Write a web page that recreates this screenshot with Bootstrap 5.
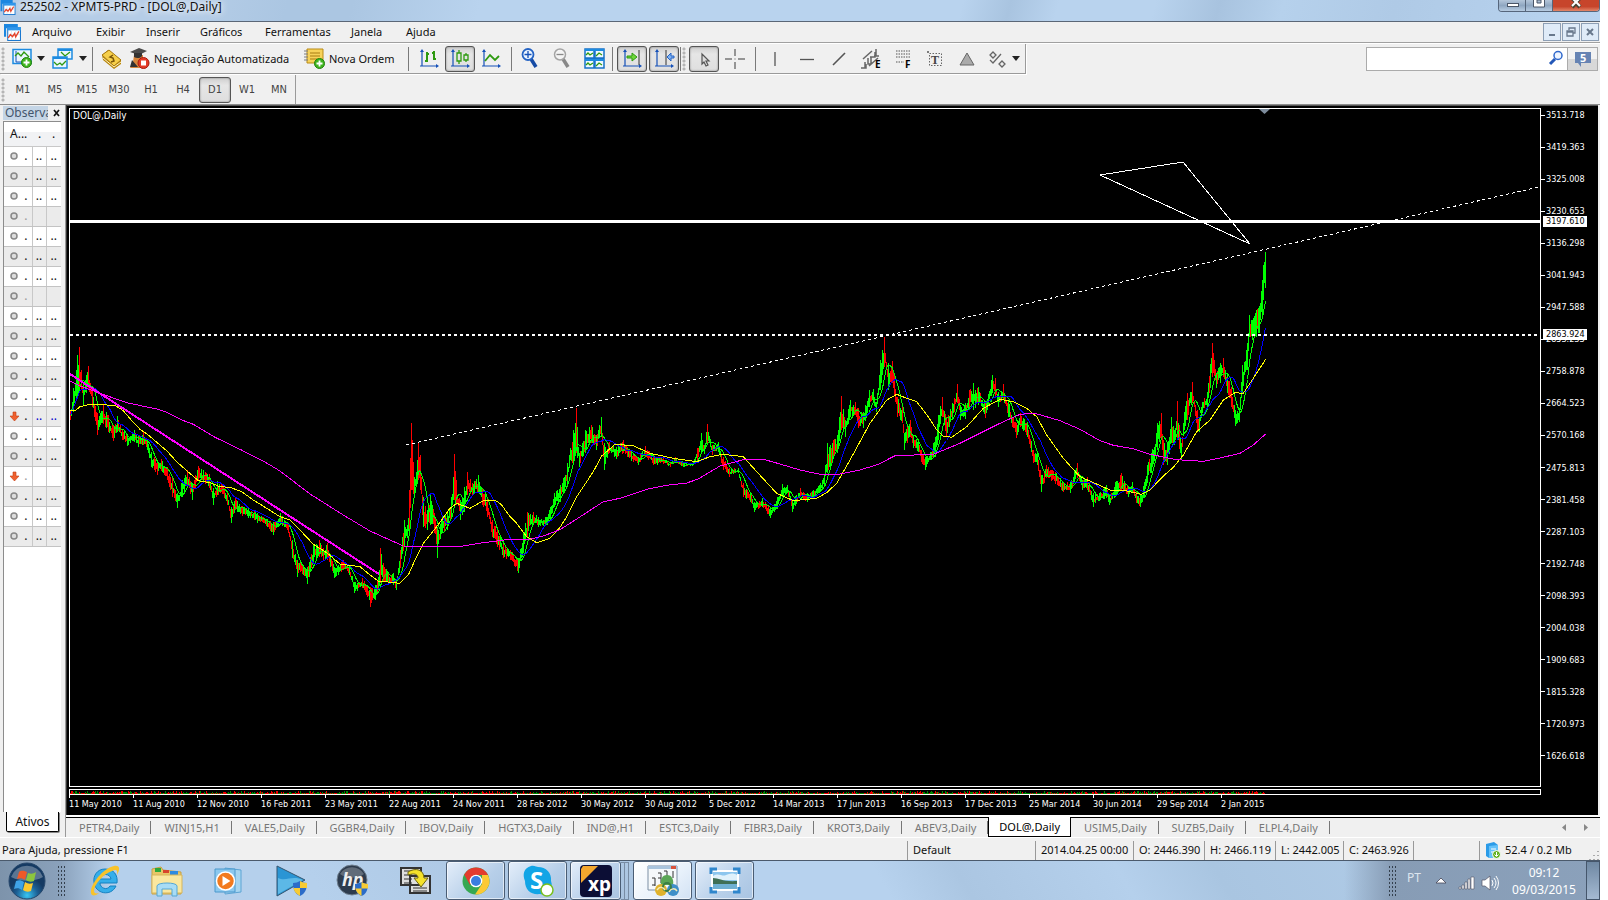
<!DOCTYPE html>
<html lang="pt-BR">
<head>
<meta charset="utf-8">
<meta name="viewport" content="width=device-width, initial-scale=1">
<title>252502 - XPMT5-PRD - [DOL@,Daily]</title>
<link rel="stylesheet" href="https://cdn.jsdelivr.net/npm/bootstrap@5.3.0/dist/css/bootstrap.min.css">
<style>
  :root { --ui: "Noto Sans", "Open Sans", sans-serif; --tahoma: "DejaVu Sans Condensed", "DejaVu Sans", sans-serif; }
  body { font-family: var(--ui); font-size: 11px; line-height: 16px; color: #111; background: #fff; padding-right: 8px; }
  svg { display: block; flex: none; overflow: visible; }
  button { border: 0; background: none; padding: 0; color: inherit; }
  .app-window { min-height: 100vh; background: #f0f0f0; }
  .aero { background: linear-gradient(105deg, #b5cde7 0 12%, #abc6e2 18% 22%, #b9d3ee 30% 60%, #a9c4e0 63%, #b9d3ee 66% 72%, #a8c3df 76%, #b6d1ec 80%, #afcae6 87%, #b9d4f0 100%); }
  .title-strip { height: 22px; border-bottom: 1px solid #5b6777; font-size: 12px; }
  .title-name { text-shadow: 0 0 6px #fff, 0 0 8px #fff; padding-bottom: 7px; }
  .title-name span { line-height: 14px; }
  .caption-btns { height: 12px; border: 1px solid #56667c; border-top: 0; border-radius: 0 0 4px 4px; overflow: hidden; }
  .caption-btns button { width: 27px; background: linear-gradient(#b4c6da, #8fa7c1 50%, #b7cce2); border-right: 1px solid #56667c; }
  .caption-btns button:last-child { width: 46px; border: 0; background: linear-gradient(#c7452b 60%, #e2876a); }
  .menu-strip { height: 21px; border-bottom: 1px solid #a0a0a0; box-shadow: 0 1px #fff; }
  .menu-strip a { color: #111; text-decoration: none; }
  .menu-items { margin-left: 11px; }
  .mdi-btn { width: 18px; height: 18px; border: 1px solid #8d9fb5; background: #dfebf8; display: grid; place-items: center; }
  .tool-row { margin-top: 1px; }
  .tool-strip { height: 30px; border-bottom: 1px solid #9a9a9a; width: 1026px; border-right: 1px solid #9a9a9a; box-shadow: 1px 1px #fff; }
  .grip { width: 8px; height: 24px; background: radial-gradient(circle at 3px 2px, #b5b5b5 1px, transparent 2px) 0 0 / 8px 4px; flex: none; }
  .tb { width: 32px; height: 26px; display: grid; place-items: center; flex: none; }
  .tb.down { border: 1px solid #555; border-radius: 3px; background: linear-gradient(#cfcfcf, #e6e6e6 30%, #dedede); width: 30px; box-shadow: inset 0 0 2px #777; }
  .tb.slim { width: 28px; }
  .auto-btn { width: 179px; padding-left: 4px; white-space: nowrap; }
  .order-btn { width: 104px; white-space: nowrap; }
  .caret { width: 10px; height: 26px; display: grid; place-items: center; flex: none; }
  .sep { width: 1px; height: 24px; background: #7a7a7a; flex: none; }
  .find-field { width: 202px; height: 24px; border: 1px solid #ababab; border-radius: 0; background: #fff; padding: 0 24px 0 4px; }
  .find-icon { position: absolute; right: 4px; top: 3px; }
  .chat-btn { width: 30px; height: 24px; border: 1px solid #ababab; border-left: 0; background: linear-gradient(#f2f2f2 50%, #d8d8d8 50%); }
  .frame-strip { height: 31px; border-bottom: 1px solid #8c8c8c; padding-top: 1px; }
  .frame-group { border-right: 1px solid #9a9a9a; color: #444; font: 11px/16px var(--tahoma); width: 296px; }

  .side { width: 66px; flex: none; border-right: 1px solid #999; padding-left: 3px; }
  .side-cap { height: 16px; color: #44566c; font-size: 12px; }
  .side-cap span { width: 45px; overflow: hidden; background: #c4d5e6; padding-left: 2px; white-space: nowrap; line-height: 14px; }
  .side-body { background: #fff; border-left: 1px solid #8c8c8c; border-top: 1px solid #8c8c8c; width: 58px; }
  .watch { width: 57px; table-layout: fixed; border-collapse: collapse; font-size: 12px; }
  .watch th { height: 24px; font-weight: 400; border-bottom: 1px solid #c8c8c8; background: linear-gradient(#fff 40%, #f1f2f4 40%); padding: 0 0 0 6px; }
  .watch td { height: 20px; border-bottom: 1px solid #c3c3c3; border-right: 1px solid #c8c8c8; padding: 0; text-align: center; line-height: 14px; }
  .watch td:last-child { border-right: 0; }
  .watch tr:nth-child(even) td { background: #ebebeb; }
  .watch .first-cell { padding: 0 4px 0 6px; }
  .watch .fade-dot { color: #999; }
  .watch .blue-dot { color: #00c; }
  .side-tab { margin: 0 6px 5px 3px; height: 20px; background: #fff; border: 1px solid #000; border-top: 0; border-radius: 0 0 2px 2px; box-shadow: 1px 1px #888; font-size: 12px; }

  .chart-area { background: #000; color: #fff; border-top: 1px solid #555; font: 9px/12px var(--tahoma); margin-right: 2px; padding: 2px 0 0 2px; border-left: 1px solid #333; }
  .plot { position: relative; min-height: 400px; }
  .plot svg.plot-svg { position: absolute; inset: 0; width: 100%; height: 100%; }
  .plot-name { position: absolute; left: 4px; top: 2px; font-size: 10px; }
  .price-scale { width: 57px; position: relative; padding: 1px 0 33px 0; flex: none; }
  .price-scale div { line-height: 12px; height: 12px; display: flex; align-items: center; gap: 1px; }
  .price-scale div::before { content: ""; width: 4px; height: 1px; background: #fff; }
  .price-tag { position: absolute; left: 2px; background: #fff; color: #000; line-height: 11px; padding: 0 2px 0 3px; }
  .time-scale { height: 20px; padding-right: 313px; }
  .time-scale div { width: 0; flex: 1 1 0; white-space: nowrap; line-height: 13px; padding-top: 3px; position: relative; }
  .time-scale div::before { content: ""; position: absolute; left: 0; top: -1px; width: 1px; height: 4px; background: #fff; }

  .tab-strip { height: 20px; border-top: 1px solid #000; margin-top: 2px; color: #777; box-shadow: 0 -2px #fff; }
  .tab-strip button { height: 19px; padding: 0 12px 0 13px; position: relative; white-space: nowrap; }
  .tab-strip button::after { content: ""; position: absolute; right: 0; top: 3px; height: 13px; width: 1px; background: #777; }
  .tab-strip button.on { background: #fff; color: #000; border: 1px solid #000; border-top: 0; margin-top: -1px; height: 20px; padding: 0 10px; }
  .tab-strip button.on::after { display: none; }
  .tab-arrows { gap: 18px; padding-top: 6px; }
  .status-strip { height: 23px; border-top: 1px solid #fff; padding-top: 2px; }
  .status-strip .field { height: 19px; line-height: 18px; border-left: 1px solid #999; padding-left: 5px; white-space: nowrap; overflow: hidden; flex: none; }

  .task-strip { height: 40px; border-top: 1px solid #4b5a6c; position: relative; background: linear-gradient(90deg, #7d93ab 0, #8aa1bb 60px, transparent 110px, transparent 84%, #879cb5 87%, #8ba1bb 100%), linear-gradient(60deg, #b5d0ec 0 20%, #a9c3df 38%, #b7d2ee 45% 55%, #abc6e2 60%, #b5d0ec 70%, #a9c5e1 76%, #b6d1ec 100%); }
  .start-btn { width: 53px; }
  .task-strip .launch { width: 62px; height: 39px; display: grid; place-items: center; flex: none; }
  .task-strip .open-app { width: 59px; height: 39px; margin-right: 3px; border: 1px solid #4a5d74; border-radius: 3px; background: linear-gradient(135deg, #e4eefa, #b7cfe9 60%, #a9c4e2); box-shadow: inset 0 0 0 1px #ffffff99; display: grid; place-items: center; flex: none; }
  .task-strip .open-app.lit { background: linear-gradient(135deg, #fff, #e8f1fb 60%, #d2e2f4); }
  .task-strip .open-app.stacked { width: 51px; margin-right: 0; }
  .stack-edge { width: 4px; height: 38px; border: 1px solid #788ca4; border-left: 0; flex: none; }
  .dots-grip { width: 9px; height: 32px; background: radial-gradient(circle, #34404e 1px, transparent 1px) 0 0 / 3px 4px; flex: none; }
  .tray { color: #fff; font-size: 12px; }
  .tray .lang { color: #dde5ee; width: 28px; margin-bottom: 5px; }
  .clock { line-height: 17px; width: 74px; text-align: center; margin: 0 5px 0 8px; }
  .peek { width: 14px; height: 39px; border: 1px solid #45566b; background: linear-gradient(#6f88a3, #a5bad2); flex: none; }
</style>
</head>
<body>
<svg width="0" height="0" class="position-absolute" aria-hidden="true">
  <symbol id="appmark" viewBox="0 0 16 16"><path d="M0 0h13v4H2v8H0z" fill="#1b86e0"/><rect x="3.500" y="3.500" width="12" height="12" fill="#fff" stroke="#1b78cf"/><path d="M3 3h13v3H3z" fill="#2f96ea"/><path d="M7 6v9M11 6v9M4 10h11" stroke="#d5dde6" stroke-width=".7"/><path d="M4 13l2-3 2 2 2-3 1 3 3-5" fill="none" stroke="#e5442b" stroke-width="1.300"/></symbol>
  <symbol id="plus" viewBox="0 0 11 11"><circle cx="5.500" cy="5.500" r="5" fill="#3fb51e" stroke="#20800c"/><path d="M5.500 2.500v6M2.500 5.500h6" stroke="#fff" stroke-width="1.800"/></symbol>
  <symbol id="axes" viewBox="0 0 20 20"><path d="M3 2v15h15M1 17h3" fill="none" stroke="#1450b8" stroke-width="1.200"/><path d="M3 0l2 3H1zM20 17l-3-2v4z" fill="#1450b8"/></symbol>
  <symbol id="shield" viewBox="0 0 14 15"><path d="M7 0c2 1 4 2 7 2 0 6-2 11-7 13C2 13 0 8 0 2c3 0 5-1 7-2z" fill="#2b6cc8"/><path d="M7 0c2 1 4 2 7 2v5H7zM7 7v8C3 13 1 10 .5 7z" fill="#f7cb34"/></symbol>
</svg>

<div class="app-window d-flex flex-column">
  <header class="title-strip aero d-flex justify-content-between align-items-start">
    <div class="title-name d-flex align-items-start gap-1"><svg width="16" height="15"><use href="#appmark"/></svg><span>252502 - XPMT5-PRD - [DOL@,Daily]</span></div>
    <div class="caption-btns d-flex">
      <button aria-label="Minimizar"><svg width="26" height="12"><rect x="8.500" y="3.500" width="11" height="3" fill="#fff" stroke="#4b5768"/></svg></button>
      <button aria-label="Restaurar"><svg width="26" height="12"><path d="M7.500-2v9h11v-9zM11 0h4v3h-4z" fill="#fff" stroke="#4b5768"/></svg></button>
      <button aria-label="Fechar"><svg width="46" height="12"><path d="M19-2l4 4 4-4M19 7l4-4 4 4" fill="none" stroke="#443" stroke-width="4"/><path d="M19-2l4 4 4-4M19 6l4-4 4 4" fill="none" stroke="#fff" stroke-width="2"/></svg></button>
    </div>
  </header>

  <nav class="menu-strip d-flex align-items-center ps-1" aria-label="Menu">
    <svg width="17" height="17"><use href="#appmark"/></svg>
    <div class="menu-items d-flex" id="menus"></div>
    <div class="ms-auto d-flex" style="gap:1px;padding-right:1px">
      <button class="mdi-btn" aria-label="Minimizar gráfico"><svg width="10" height="10"><path d="M2 8h6" stroke="#68788c" stroke-width="2"/></svg></button>
      <button class="mdi-btn" aria-label="Restaurar gráfico"><svg width="10" height="10"><path d="M3 3V1h6v5H7M1 4h6v5H1zM1 5h6" fill="none" stroke="#68788c" stroke-width="1.300"/></svg></button>
      <button class="mdi-btn" aria-label="Fechar gráfico"><svg width="10" height="10"><path d="M2 2l6 6M8 2l-6 6" stroke="#68788c" stroke-width="2"/></svg></button>
    </div>
  </nav>

  <div class="tool-row d-flex align-items-start">
    <div class="tool-strip d-flex align-items-center flex-shrink-0">
      <span class="grip"></span>
      <button class="tb slim" aria-label="Novo gráfico"><svg width="21" height="21"><path d="M1 1.500h18v14H1z" fill="#e9f5ff" stroke="#1d8be0" stroke-width="1.500"/><path d="M4 3v11h13" fill="none" stroke="#1450b8"/><path d="M3 8l3-3 3 3 3-4 5 5" fill="none" stroke="#2e9a10" stroke-width="1.300"/><use href="#plus" x="9" y="9" width="11" height="11"/></svg></button>
      <span class="caret"><svg width="8" height="5"><path d="M0 0h8L4 5z" fill="#222"/></svg></span>
      <button class="tb" aria-label="Perfis"><svg width="21" height="21"><path d="M6 1h14v10H6z" fill="#e9f5ff" stroke="#1d8be0" stroke-width="1.500"/><path d="M6 1h14v2H6z" fill="#1d8be0"/><path d="M1 9h14v11H1z" fill="#e9f5ff" stroke="#1d8be0" stroke-width="1.500"/><path d="M1 9h14v2H1z" fill="#1d8be0"/><path d="M9 4l4 4 5-4M2 14l3 3 3-2 2 2 4-4" fill="none" stroke="#2e9a10" stroke-width="1.300"/></svg></button>
      <span class="caret"><svg width="8" height="5"><path d="M0 0h8L4 5z" fill="#222"/></svg></span>
      <span class="sep mx-1"></span>
      <button class="tb slim" aria-label="Observação do mercado"><svg width="21" height="20"><path d="M1 6l6-5 13 10v4l-7 5L2 11z" fill="#b8860b"/><path d="M1 6l7-5 12 10-7 6z" fill="#f6cf4a" stroke="#a87a10"/><path d="M2 9l11 9 7-5" fill="none" stroke="#fff3c0"/><path d="M12 6l-3 2 3 1 1 3-3 1" fill="none" stroke="#7a560a" stroke-width="1.500"/></svg></button>
      <button class="auto-btn d-flex align-items-center gap-1"><svg width="21" height="22"><path d="M5 7h9v5l2 8H1l3-6z" fill="#d7853c"/><path d="M1 4l9-4 8 3-8 4z" fill="#4b4b4b"/><path d="M5 5v4c3 2 7 1 8-1V5M3 12l-2 7h8z" fill="#333"/><circle cx="14.500" cy="15" r="5.500" fill="#e23a26" stroke="#a81b0e"/><path d="M12 12.500h5v5h-5z" fill="#fff"/></svg>Negociação Automatizada</button>
      <button class="order-btn d-flex align-items-center gap-1"><svg width="21" height="21"><path d="M3 1h16v14H3z" fill="#f7d25a" stroke="#b98b17"/><path d="M6 5h10M6 8h10M6 11h7" stroke="#a77d13"/><path d="M0 3h4M0 6h4M0 9h4M0 12h4" stroke="#7c7c7c"/><use href="#plus" x="10" y="10" width="11" height="11"/></svg>Nova Ordem</button>
      <span class="sep"></span>
      <button class="tb ms-1" aria-label="Barras"><svg width="20" height="20"><use href="#axes" width="20" height="20"/><path d="M8 3v10M6 12h2M8 5h2M15 2v9M13 4h2M15 10h2" fill="none" stroke="#2e9a10" stroke-width="2"/></svg></button>
      <button class="tb down" aria-label="Candles"><svg width="20" height="20"><use href="#axes" width="20" height="20"/><path d="M9 1v3M9 12v3M16 4v2M16 11v2M7 4h4v8H7zM14 6h4v5h-4z" fill="none" stroke="#2e9a10" stroke-width="1.300"/></svg></button>
      <button class="tb" aria-label="Linha"><svg width="20" height="20"><use href="#axes" width="20" height="20"/><path d="M4 12l5-6 5 5 4-4" fill="none" stroke="#2e9a10" stroke-width="1.800"/></svg></button>
      <span class="sep mx-1"></span>
      <button class="tb slim" aria-label="Ampliar"><svg width="18" height="21"><path d="M10 11l5 8" stroke="#164ba5" stroke-width="3.500"/><circle cx="7" cy="6.500" r="5.500" fill="#eaf4ff" stroke="#2463c4" stroke-width="1.800"/><path d="M7 3v7M3.500 6.500h7" stroke="#1450b8" stroke-width="1.300"/></svg></button>
      <button class="tb" style="width:36px" aria-label="Reduzir"><svg width="18" height="21"><path d="M10 11l5 8" stroke="#888" stroke-width="3.500"/><circle cx="7" cy="6.500" r="5.500" fill="#f4f4f4" stroke="#a4a4a4" stroke-width="1.500"/><path d="M3.500 6.500h7" stroke="#888" stroke-width="1.300"/></svg></button>
      <button class="tb slim" aria-label="Lado a lado"><svg width="21" height="21"><path d="M1 1h9v9H1zM11 1h9v9h-9zM1 11h9v9H1zM11 11h9v9h-9z" fill="#eef8ff" stroke="#1672c8" stroke-width="1.500"/><path d="M1 2h19M1 12h19" stroke="#1d8be0" stroke-width="2"/><path d="M2 7l2-2 2 2 3-2M12 8l3-3 3 2M2 17l2-2 2 2 3-2M12 18l3-3 3 2" fill="none" stroke="#2e9a10" stroke-width="1.300"/></svg></button>
      <span class="sep mx-1"></span>
      <button class="tb down" aria-label="Rolagem automática"><svg width="20" height="20"><use href="#axes" width="20" height="20"/><path d="M17 1v15" stroke="#333"/><path d="M5 7h5V4l5 4-5 4V9H5z" fill="#6fd63a" stroke="#2e9a10"/></svg></button>
      <button class="tb down" style="margin-left:2px" aria-label="Deslocar gráfico"><svg width="20" height="20"><use href="#axes" width="20" height="20"/><path d="M12 1v15" stroke="#333"/><path d="M20 7h-3V4l-4 4 4 4V9h3z" fill="#7fb2f2" stroke="#2463c4"/></svg></button>
      <span class="sep" style="margin-left:1px"></span><span class="grip"></span>
      <button class="tb down" aria-label="Cursor"><svg width="16" height="18"><path d="M6 4v10l2-2 2 4 2-1-2-4h3z" fill="#ddd" stroke="#555" stroke-width="1.200"/></svg></button>
      <button class="tb" aria-label="Mira"><svg width="20" height="20"><path d="M10 0v7M10 13v7M0 10h7M13 10h7" stroke="#777" stroke-width="1.500"/><path d="M9.500 9.500h1v1h-1z" fill="#555"/></svg></button>
      <span class="sep ms-1" style="margin-right:3px"></span>
      <button class="tb" aria-label="Linha vertical"><svg width="20" height="20"><path d="M10 3v14" stroke="#555" stroke-width="1.300"/></svg></button>
      <button class="tb" aria-label="Linha horizontal"><svg width="20" height="20"><path d="M3 10.500h14" stroke="#555" stroke-width="1.300"/></svg></button>
      <button class="tb" aria-label="Linha de tendência"><svg width="20" height="20"><path d="M4 16L16 4" stroke="#555" stroke-width="1.600"/></svg></button>
      <button class="tb" aria-label="Canal"><svg width="20" height="20"><path d="M2 10L11 2M8 17l9-8M0 19h5v-4M4 19v-6M7 9v6h3V8M9 8h5V3M15 0v7M13 7h5" fill="none" stroke="#666" stroke-width="1.500"/><text x="14" y="19" font-size="10" font-weight="700" fill="#000">E</text></svg></button>
      <button class="tb" aria-label="Fibonacci"><svg width="20" height="20"><path d="M3 2h14M3 5h14M3 8h14M3 13h8" stroke="#555" stroke-dasharray="1.500 1"/><text x="12" y="19" font-size="10" font-weight="700" fill="#000">F</text></svg></button>
      <button class="tb" aria-label="Texto"><svg width="20" height="20"><path d="M4.500 4.500h12v12h-12z" fill="none" stroke="#666" stroke-dasharray="1.500 1.500"/><text x="6" y="15" font-size="12" font-weight="700" font-family="Liberation Serif" fill="#444">T</text><circle cx="3" cy="3" r="1" fill="#555"/></svg></button>
      <button class="tb" aria-label="Formas"><svg width="20" height="20"><path d="M10 4l7 12H3z" fill="#aaa" stroke="#666"/></svg></button>
      <button class="tb slim" aria-label="Setas"><svg width="20" height="20"><path d="M6 3l3 3-3 3-3-3z" fill="#eee" stroke="#666" stroke-width="1.300"/><path d="M15 12l3 3-3 3-3-3z" fill="#eee" stroke="#666" stroke-width="1.300"/><path d="M3 11l3 3 8-9" fill="none" stroke="#666" stroke-width="1.300"/></svg></button>
      <span class="caret"><svg width="8" height="5"><path d="M0 0h8L4 5z" fill="#222"/></svg></span>
    </div>
    <form class="ms-auto d-flex" style="padding:3px 2px 0 0" onsubmit="return false">
      <div class="position-relative"><input class="find-field d-block" type="search" aria-label="Pesquisar"><svg class="find-icon" width="16" height="16"><path d="M2 14l5-5" stroke="#2358b8" stroke-width="3"/><circle cx="10" cy="5.500" r="4" fill="#eef5ff" stroke="#2f68cc" stroke-width="1.500"/></svg></div>
      <button class="chat-btn d-grid align-items-center justify-content-center" aria-label="Mensagens"><svg width="18" height="17"><path d="M1 1h16v11H7v4l-3-4H1z" fill="#6683b3"/><text x="6" y="11" font-size="11" font-weight="700" fill="#fff">5</text></svg></button>
    </form>
  </div>

  <div class="frame-strip d-flex">
    <div class="frame-group d-flex align-items-center"><span class="grip" style="width:7px"></span><span class="d-flex" id="frames"></span></div>
  </div>

  <div class="d-flex flex-grow-1 align-items-stretch">
    <aside class="side d-flex flex-column">
      <div class="side-cap d-flex justify-content-between align-items-center"><span>Observação</span><button class="me-1" aria-label="Fechar painel"><svg width="8" height="8"><path d="M1 1l5 6M6 1L1 7" stroke="#111" stroke-width="1.700"/></svg></button></div>
      <div class="side-body flex-grow-1">
        <table class="watch"><colgroup><col style="width:28px"><col style="width:14px"><col></colgroup>
          <thead><tr><th>A...</th><th>.</th><th>.</th></tr></thead><tbody id="watch"></tbody></table>
      </div>
      <button class="side-tab text-center">Ativos</button>
    </aside>

    <main class="flex-grow-1 d-flex flex-column" style="min-width:0">
      <section class="chart-area flex-grow-1 d-flex flex-column">
        <div class="d-flex flex-grow-1">
          <div class="plot flex-grow-1">
            <svg class="plot-svg" id="plot" viewBox="69 108 1472 687" preserveAspectRatio="none" role="img" aria-label="Gráfico diário DOL@"></svg>
            <span class="plot-name">DOL@,Daily</span>
          </div>
          <div class="price-scale d-flex flex-column justify-content-between" id="prices">
            <span class="price-tag" style="top:15.700%">3197.610</span><span class="price-tag" style="top:32.200%">2863.924</span>
          </div>
        </div>
        <div class="time-scale d-flex" id="times"></div>
      </section>
      <div class="tab-strip d-flex align-items-start" id="tabs"></div>
    </main>
  </div>

  <footer class="status-strip d-flex align-items-center">
    <span class="flex-grow-1" style="padding-left:2px">Para Ajuda, pressione F1</span>
    <span class="field" style="width:128px">Default</span><span class="field" style="width:98px">2014.04.25 00:00</span>
    <span class="field" style="width:71px">O: 2446.390</span><span class="field" style="width:71px">H: 2466.119</span>
    <span class="field" style="width:68px">L: 2442.005</span><span class="field" style="width:70px">C: 2463.926</span>
    <span class="field" style="width:66px"></span>
    <span class="field d-flex align-items-center gap-1" style="width:121px"><svg width="16" height="17"><path d="M1 2l8-2 4 3v12l-9 1-3-2z" fill="#2b9be8"/><path d="M4 4l9-1v12l-9 1z" fill="#63c1fa"/><path d="M6 7h5M6 10h5" stroke="#fff"/><circle cx="11.500" cy="12.500" r="4" fill="#62b01e" stroke="#fff"/><path d="M11.500 10v4M9.500 12.500l2 2 2-2" stroke="#fff" fill="none"/></svg>52.4 / 0.2 Mb
      <svg class="ms-auto align-self-end" width="10" height="10"><path d="M8 1v1M8 5v1M8 9v1M4 5v1M4 9v1M0 9v1" stroke="#aaa" stroke-width="2"/></svg></span>
  </footer>

  <footer class="task-strip d-flex align-items-center">
    <button class="start-btn d-grid justify-content-center" aria-label="Iniciar"><svg width="38" height="38" viewBox="0 0 38 38"><defs><radialGradient id="orb" cy=".9"><stop offset="0" stop-color="#39c6f2"/><stop offset=".6" stop-color="#1c5f94"/><stop offset="1" stop-color="#153a63"/></radialGradient></defs><circle cx="19" cy="19" r="18" fill="url(#orb)" stroke="#27476b"/><path d="M3 15a17 17 0 0 1 32 0c-9 5-22 5-32 0z" fill="#fff" opacity=".3"/><path d="M11 10c3-2 5-1 8 0l-2 8c-3-2-5-2-8-1z" fill="#f05a28"/><path d="M20 11c3 1 5 1 8-1l-2 9c-3 1-5 1-8-1z" fill="#8cc63e"/><path d="M8 19c3-1 5-1 8 1l-2 8c-3-2-5-2-8-1z" fill="#3fa3e8"/><path d="M17 20c3 2 5 2 8 1l-2 8c-3 1-5 1-8-1z" fill="#fdc82f"/></svg></button>
    <span class="dots-grip" style="margin:0 8px 0 4px"></span>
    <button class="launch" aria-label="Internet Explorer"><svg width="32" height="32"><path d="M16 4C8 4 4 11 5 17c1 12 17 15 22 4h-6c-3 5-10 2-10-3h17C29 10 25 4 16 4zM11 14c1-6 10-6 11 0z" fill="#35aeea" stroke="#1580c0"/><path d="M3 30C-2 24 12 4 25 1c5-1 7 2 3 9 1-5-1-6-5-4C14 9 5 20 5 26c0 2 2 3 5 2-2 2-5 3-7 2z" fill="#f8c32a"/></svg></button>
    <button class="launch" aria-label="Explorador de arquivos"><svg width="34" height="32"><path d="M2 4l9-2 2 3 18 2v22H2z" fill="#e8c768" stroke="#c7a145"/><path d="M5 3h6v4H5z" fill="#2ea83a"/><path d="M13 5h6v3h-6z" fill="#d8442c"/><path d="M20 6h8v4h-8z" fill="#2f8be0"/><path d="M2 10h30v18H2z" fill="#fae79f" stroke="#d6b55c"/><path d="M7 31V21c0-4 20-4 20 0v10h-5v-7H12v7z" fill="#a8dcf5" stroke="#56a7d4"/></svg></button>
    <button class="launch" aria-label="Windows Media Player"><svg width="32" height="30"><path d="M12 2l16 2v22l-16 2z" fill="#a7d5f0" stroke="#5ca4d4"/><path d="M2 3h20v23H2z" fill="#8cc8ee" stroke="#4a98cc"/><circle cx="12.500" cy="15" r="9" fill="#f27a1e" stroke="#fff" stroke-width="1.500"/><path d="M9.500 10l8 5-8 5z" fill="#fff"/></svg></button>
    <button class="launch" aria-label="Player"><svg width="34" height="32"><path d="M3 1l28 14L3 31z" fill="#2a95d4" stroke="#35556f"/><path d="M4 13c8 4 14-3 25 2L4 29z" fill="#7fd0f4" opacity=".6"/><use href="#shield" x="19" y="16" width="14" height="15"/></svg></button>
    <button class="launch" aria-label="HP"><svg width="34" height="34"><circle cx="16" cy="16" r="15" fill="#2d3b4d" stroke="#708090"/><path d="M4 10a14 14 0 0 1 24 0c-7 5-17 5-24 0z" fill="#fff" opacity=".25"/><text x="6" y="22" font-size="18" font-weight="700" font-style="italic" fill="#eee">hp</text><use href="#shield" x="19" y="18" width="13" height="14"/></svg></button>
    <button class="launch" aria-label="Terminal remoto"><svg width="32" height="30"><path d="M2 2h20v17H2zM11 10h20v17H11z" fill="#ddd" stroke="#333" stroke-width="2"/><path d="M5 5h14M5 9h8M5 13h8M14 22h14M14 25h14M5 17h8" stroke="#333"/><path d="M9 6c8-5 16-2 16 6h4l-7 9-7-9h4c0-4-4-5-10-3z" fill="#f5e22a" stroke="#6d6412"/></svg></button>
    <button class="open-app" aria-label="Google Chrome"><svg width="28" height="28" viewBox="0 0 28 28"><circle cx="14" cy="14" r="13.500" fill="#36a852"/><path d="M14 .5A13.500 13.500 0 0 1 26 8H14L8 18 2.200 7.500A13.500 13.500 0 0 1 14 .5z" fill="#e33b2e"/><path d="M26 8a13.500 13.500 0 0 1-13 19.500L20 17V8z" fill="#fcc934"/><circle cx="14" cy="14" r="6.300" fill="#fff"/><circle cx="14" cy="14" r="5" fill="#3a7de0"/></svg></button>
    <button class="open-app" aria-label="Skype"><svg width="32" height="32"><path d="M9 1c3-1 6 1 7 1 8 0 14 6 13 14 3 9-3 15-11 13C9 30 3 25 3 16 0 9 2 3 9 1z" fill="#12a5e6"/><text x="8" y="24" font-size="24" font-weight="700" fill="#fff">S</text><circle cx="25" cy="25" r="6" fill="#fff" stroke="#7ac01e" stroke-width="1.500"/></svg></button>
    <button class="open-app stacked" aria-label="XP Pro"><svg width="32" height="32"><rect width="32" height="32" rx="4" fill="#0c0e35"/><path d="M3 1h15L1 18V4z" fill="#f3a72e"/><text x="8" y="26" font-size="19" font-weight="700" fill="#fff">xp</text></svg></button>
    <span class="stack-edge"></span><span class="stack-edge me-1"></span>
    <button class="open-app lit" aria-label="MetaTrader"><svg width="32" height="32"><path d="M1 1h29v24H1z" fill="#f5f8fa" stroke="#7c8fa4"/><path d="M1 1h29v3H1z" fill="#a9c4dd"/><path d="M24 1h5v3h-5z" fill="#d9533c"/><path d="M5 13h3v8M11 8h3v10M17 6h3v8M5 20h3M11 13h3M26 6v7" fill="none" stroke="#333"/><path d="M20 10c5 0 7 5 6 10h-12c-1-5 1-10 6-10z" fill="#5aa655"/><circle cx="14" cy="25" r="6" fill="#e0b22c"/><circle cx="26" cy="25" r="6" fill="#3f8fc8"/><circle cx="20" cy="22" r="4" fill="none" stroke="#3b7d45" stroke-width="2"/><path d="M10 25c3-4 6-3 8 0M22 27c2-4 6-4 8-1" fill="none" stroke="#f6ecb4" stroke-width="1.500"/></svg></button>
    <button class="open-app" aria-label="Visualizador de fotos"><svg width="32" height="28"><path d="M3 4h26v19H3z" fill="#8cc6ee" stroke="#fff" stroke-width="2"/><path d="M4 9c6-4 9 1 13-1s8-2 11 0v5H4z" fill="#dff1fb"/><path d="M4 11c6 0 10 4 24 3v4H4z" fill="#3f6f55"/><path d="M4 17h24v5H4z" fill="#6fb0d2"/><path d="M2 7V2h6M24 2h6v5M30 20v5h-6M8 25H2v-5" fill="none" stroke="#2f86cc" stroke-width="3"/></svg></button>
    <div class="tray ms-auto d-flex align-items-center">
      <span class="dots-grip" style="margin-right:10px"></span>
      <span class="lang">PT</span>
      <svg width="12" height="8"><path d="M6 1l5 5H1z" fill="#fff" stroke="#445" stroke-width=".8"/></svg>
      <svg style="margin:5px 6px 0 11px" width="17" height="14"><path d="M1 11h2v2H1zM4 9h2v4H4zM7 6h2v7H7zM10 3h2v10h-2zM13 1h3v12h-3z" fill="#fff" stroke="#556" stroke-width=".6"/></svg>
      <svg width="18" height="16" class="mt-1"><path d="M1 5h3l5-4v14l-5-4H1z" fill="#fff" stroke="#556" stroke-width=".7"/><path d="M11 5q2 3 0 6M13 3q4 5 0 10M15 1q5 7 0 14" fill="none" stroke="#fff"/></svg>
      <div class="clock">09:12<br>09/03/2015</div>
      <button class="peek" aria-label="Mostrar área de trabalho"></button>
    </div>
  </footer>
</div>

<script src="https://cdn.jsdelivr.net/npm/bootstrap@5.3.0/dist/js/bootstrap.bundle.min.js"></script>
<script>
const $ = id => document.getElementById(id);
$('menus').innerHTML = [['Arquivo',64],['Exibir',50],['Inserir',54],['Gráficos',65],['Ferramentas',86],['Janela',55],['Ajuda',50]]
  .map(([t, w]) => `<a href="#" style="width:${w}px">${t}</a>`).join('');
$('frames').innerHTML = ['M1','M5','M15','M30','H1','H4','D1','W1','MN']
  .map(t => `<button class="tb${t === 'D1' ? ' down' : ''}" ${t === 'D1' ? 'style="width:32px"' : ''}>${t}</button>`).join('');

// market watch: r = regular, q = quiet, b = blue falling, f = falling quiet
const ring = '<svg class="d-inline-block" width="8" height="8"><circle cx="4" cy="4" r="3" fill="#ddd" stroke="#888" stroke-width="1.500"/></svg>';
const down = '<svg class="d-inline-block" width="9" height="9"><path d="M3 0h3v4h3L4.500 9 0 4h3z" fill="#f0612f" stroke="#c23c12" stroke-width=".6"/></svg>';
$('watch').innerHTML = [...'rrrqrrrqrrrrrbrrfrrr'].map(k => {
  const dots = k === 'q' || k === 'f' ? '' : '..', c = k === 'b' ? 'blue-dot' : '';
  return `<tr><td><span class="first-cell d-flex align-items-center justify-content-between">${'bf'.includes(k) ? down : ring}<span class="${dots ? '' : 'fade-dot'}">.</span></span></td><td class="${c}">${dots}</td><td class="${c}">${dots}</td></tr>`;
}).join('');

$('prices').insertAdjacentHTML('afterbegin', Array.from({length: 21}, (_, i) => `<div>${(3513.718 - i * 94.355).toFixed(3)}</div>`).join(''));
$('times').innerHTML = ['11 May 2010','11 Aug 2010','12 Nov 2010','16 Feb 2011','23 May 2011','22 Aug 2011','24 Nov 2011','28 Feb 2012','30 May 2012','30 Aug 2012','5 Dec 2012','14 Mar 2013','17 Jun 2013','16 Sep 2013','17 Dec 2013','25 Mar 2014','30 Jun 2014','29 Sep 2014','2 Jan 2015']
  .map(t => `<div>${t}</div>`).join('');
$('tabs').innerHTML = ['PETR4,Daily','WINJ15,H1','VALE5,Daily','GGBR4,Daily','IBOV,Daily','HGTX3,Daily','IND@,H1','ESTC3,Daily','FIBR3,Daily','KROT3,Daily','ABEV3,Daily','DOL@,Daily','USIM5,Daily','SUZB5,Daily','ELPL4,Daily']
  .map(t => `<button${t.startsWith('DOL') ? ' class="on"' : ''}>${t}</button>`).join('')
  + '<span class="tab-arrows ms-auto me-2 d-flex"><svg width="4" height="7"><path d="M4 0v7L0 3.500z" fill="#888"/></svg><svg width="8" height="7"><path d="M0 0v7l4-3.500z" fill="#888"/></svg></span>';

// price band: x, high, low
const band = [70,410,420,73,388,412,76,370,400,77,355,398,79,347,390,81,370,390,83,384,405,88,366,388,92,390,407,97,413,435,103,405,424,108,415,432,113,426,441,117,416,432,122,430,440,127,434,446,134,430,442,138,436,447,143,432,445,147,440,450,151,452,467,157,461,475,161,459,471,167,467,480,172,478,497,177,493,508,182,480,497,187,470,487,192,483,500,198,466,480,203,470,483,209,474,488,213,488,505,217,481,495,222,484,494,227,493,505,231,507,523,235,498,510,242,506,516,248,507,518,257,513,523,263,517,523,273,522,535,280,513,525,288,524,533,292,540,558,297,560,577,300,560,572,307,567,584,313,545,563,319,540,557,323,548,560,327,543,560,334,567,578,338,565,575,343,560,570,349,565,575,354,582,593,362,578,588,367,585,597,370,587,607,375,585,600,378,577,590,380,548,583,383,563,582,388,572,585,393,573,585,396,580,590,400,550,568,404,520,547,407,525,538,409,490,530,411,423,490,412,440,490,414,477,498,418,442,480,420,455,490,423,497,527,427,510,530,430,495,525,434,513,533,437,527,558,442,517,533,447,512,530,451,497,517,454,454,500,456,480,505,460,500,520,464,487,512,467,472,495,472,483,495,478,475,493,482,488,505,487,497,517,492,520,537,497,530,547,503,543,558,510,550,560,518,558,573,523,533,553,527,512,537,533,512,525,538,517,527,547,517,525,550,507,520,554,493,507,560,485,502,567,463,487,570,448,460,573,430,465,576,408,453,579,453,467,585,430,453,591,425,443,596,435,450,601,417,435,604,443,470,609,442,453,616,447,459,623,440,453,631,452,461,638,457,465,645,446,457,653,455,465,663,458,464,670,462,467,675,457,463,683,463,467,692,463,466,697,448,460,701,433,452,704,445,454,707,424,443,712,445,455,718,442,452,723,457,470,729,468,477,738,468,473,743,483,497,750,492,502,754,502,512,762,498,507,770,508,518,777,497,507,782,484,497,787,485,493,792,500,512,800,488,497,807,493,502,813,490,498,820,483,492,824,475,485,827,443,473,830,445,467,833,440,457,837,435,453,841,396,430,845,420,437,850,400,417,855,402,415,858,408,428,863,412,428,869,390,407,873,389,403,876,402,412,880,360,390,884,337,367,888,363,390,892,361,383,897,397,417,902,407,423,904,433,450,910,420,437,913,435,448,918,442,452,921,450,462,925,457,470,930,452,460,935,437,457,938,415,440,942,397,417,946,417,437,952,403,420,957,384,403,960,405,420,965,403,419,969,390,408,973,383,410,978,387,405,985,402,418,992,375,393,995,378,397,998,392,407,1003,384,400,1008,400,417,1016,423,438,1020,413,427,1027,422,437,1033,450,463,1037,452,465,1041,475,492,1046,465,478,1055,472,484,1063,482,492,1070,482,493,1077,463,478,1082,480,490,1087,477,490,1093,493,507,1100,492,500,1106,485,498,1109,495,505,1115,482,497,1121,473,490,1128,487,497,1132,482,492,1136,492,503,1140,497,507,1144,482,497,1147,465,483,1151,453,473,1157,423,450,1161,413,437,1163,440,465,1167,445,465,1171,417,443,1174,430,445,1177,401,438,1181,443,460,1184,412,430,1187,393,420,1192,382,403,1197,410,430,1199,417,432,1202,402,413,1207,392,407,1212,343,377,1216,373,388,1220,363,383,1223,358,377,1227,373,393,1231,387,407,1235,410,426,1239,408,422,1242,365,393,1247,343,370,1249,315,337,1252,320,340,1256,310,337,1259,306,333,1262,280,317,1263,265,300,1265,252,288,1266,252,270];
let seed = 7;
const rnd = () => (seed = (seed * 16807) % 2147483647) / 2147483647;
const mids = [], up = [], dn = [];
for (let k = 0, x = 70; x <= 1265; x++) {
  while (k < band.length - 6 && band[k + 3] <= x) k += 3;
  const [x0, h0, l0, x1, h1, l1] = band.slice(k, k + 6);
  const t = (x - x0) / (x1 - x0), hi = h0 + (h1 - h0) * t, lo = l0 + (l1 - l0) * t, r = lo - hi;
  const key = x === x0;
  const a = key ? hi : hi + rnd() * r * .45, b = key ? lo : lo - rnd() * r * .35;
  const slope = (h1 + l1 - h0 - l0) / (x1 - x0);
  const falling = x < 1260 && rnd() < (slope > 8 ? .9 : slope > 0 ? .62 : slope > -8 ? .24 : .05);
  (falling ? dn : up).push(`M${x + .5} ${a.toFixed(0)}V${b.toFixed(0)}`);
  mids.push((hi + lo) / 2);
}
const average = n => mids.map((_, i) => { const s = mids.slice(Math.max(0, i - n + 1), i + 1); return `${i + 70.5},${(s.reduce((p, c) => p + c) / s.length).toFixed(1)}`; }).join(' ');

// long averages: three stretches, each an origin and offsets in thirds of a pixel
const curve = parts => parts.map(([ox, oy, p]) => p.split(' ').map(q => { const [x, y] = q.split(','); return `${(ox + x / 3).toFixed(1)},${(oy + y / 3).toFixed(1)}`; }).join(' ')).join(' ');
const slow = curve([
  [60,330,'30,240 45,242 60,230 85,224 110,224 140,225 165,226 190,242 215,272 240,298 265,315 290,337 320,362 350,395 380,422 415,452 450,458 480,470 510,472 545,485 580,510 620,535 660,560 690,570 720,600 760,643 800,668 840,702 900,710 930,735 955,753 1020,760 1045,735 1065,690 1090,640 1130,590 1170,535 1190,520 1230,535 1270,512 1305,510 1325,525 1350,560 1370,580 1400,620 1430,638 1470,625'],
  [560,320,'0,622 20,590 50,530 100,455 125,408 165,373 220,377 270,400 340,415 410,425 450,410 490,403 550,410 590,455 650,520 700,542 770,535 800,518 830,490 870,420 930,310 980,240 1010,223 1040,235 1070,245 1105,290 1130,330 1150,348 1175,352 1220,320 1270,265 1320,238'],
  [1000,230,'0,508 40,515 80,535 110,560 140,615 190,685 240,740 330,780 380,783 425,793 450,780 490,738 520,712 550,675 590,605 630,570 670,510 705,488 730,490 750,460 797,388']]);
const slowest = curve([
  [60,330,'30,153 60,168 120,190 200,218 290,237 320,247 365,270 400,283 465,322 540,358 610,393 660,423 750,492 850,555 930,603 1030,648 1130,651 1210,648 1270,638 1350,628 1400,630 1450,618'],
  [560,320,'0,629 50,597 130,545 180,535 265,507 320,496 380,489 415,477 480,438 550,419 615,419 660,432 720,450 780,463 830,464 900,450 955,433 1005,407 1120,403 1200,370 1290,325'],
  [1000,230,'0,580 60,553 105,550 180,572 240,598 300,632 340,646 400,656 450,673 530,689 610,694 660,684 720,670 760,645 797,612']]);
let vg = '', vr = '';
for (let x = 70; x < 1265; x++) { const s = `M${x + .5} 794v-${rnd() < .12 ? 3 : rnd() < .3 ? 2 : 1}`; rnd() < .5 ? vg += s : vr += s; }
$('plot').innerHTML = `<g fill="none" shape-rendering="crispEdges">
  <path d="M69.500 108.500h1471v678h-1471zM69.500 789.500h1471v5h-1471z" stroke="#fff"/>
  <path d="${vg}" stroke="#080"/><path d="${vr}" stroke="#e00"/>
  <path d="M70 221.500H1540" stroke="#fff" stroke-width="3"/>
  <path d="${dn.join('')}" stroke="#f00"/><path d="${up.join('')}" stroke="#0f0"/>
  <polyline points="${average(9)}" stroke="#0f0"/>
  <polyline points="${average(24)}" stroke="#00f"/>
  <polyline points="${slow}" stroke="#ff0"/><polyline points="${slowest}" stroke="#f0f"/>
  <path d="M70 374L379 574" stroke="#f0f" stroke-width="2"/>
  <path d="M70 335H1540" stroke="#fff" stroke-width="2" stroke-dasharray="3 3"/>
  <path d="M406 445L1539 187" stroke="#fff" stroke-dasharray="3 3"/>
  <path d="M1100 175L1183 162L1250 244z" stroke="#fff"/></g>
  <path d="M1259 109h11l-5.500 5z" fill="#7d8c9c"/>`;
</script>
</body>
</html>
